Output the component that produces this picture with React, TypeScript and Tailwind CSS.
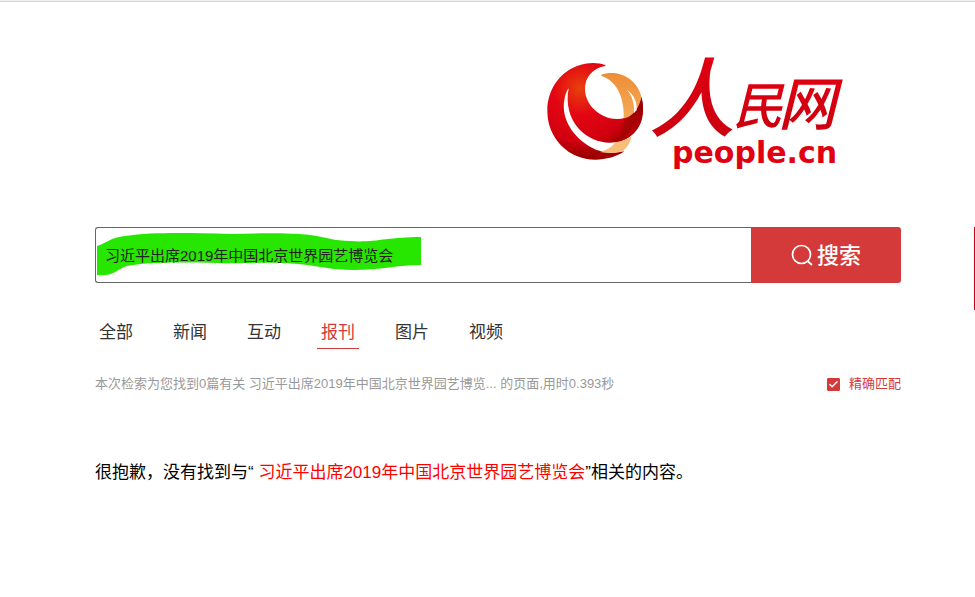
import React, { useState } from 'react'
import clsx from 'clsx'
import { Check } from 'lucide-react'

const KEYWORD = '习近平出席2019年中国北京世界园艺博览会'
const TABS = ['全部', '新闻', '互动', '报刊', '图片', '视频']

const Logo: React.FC = () => (
  <svg className="overflow-visible" width="300" height="125" viewBox="0 0 300 125" role="img" aria-label="人民网 people.cn">
    <defs>
      <radialGradient id="globe" gradientUnits="userSpaceOnUse" cx="135" cy="130" r="200">
        <stop offset="0" stopColor="#e8410c" />
        <stop offset="0.4" stopColor="#e30613" />
        <stop offset="0.8" stopColor="#d0000f" />
        <stop offset="1" stopColor="#a00000" />
      </radialGradient>
      <linearGradient id="amber" x1="0" y1="0" x2="0" y2="1">
        <stop offset="0" stopColor="#ee8d35" />
        <stop offset="1" stopColor="#f4ab5c" />
      </linearGradient>
      <linearGradient id="shade" x1="0" y1="0" x2="0" y2="1">
        <stop offset="0" stopColor="#8e0000" />
        <stop offset="1" stopColor="#c4000c" />
      </linearGradient>
      <linearGradient id="ink" x1="0" y1="0" x2="0" y2="1">
        <stop offset="0" stopColor="#e60012" />
        <stop offset="1" stopColor="#c7000e" />
      </linearGradient>
    </defs>
    <g transform="translate(-10 -5) scale(.3333)">
      <path
        fill="url(#globe)"
        d="M211 60C190 52 156 51 126 63C72 83 37 137 37 197C37 281 102 344 181 344C213 344 246 335 268 319C232 327 198 324 168 307C114 277 78 221 88 166C90 150 95 138 101 130C92 176 103 220 132 252C162 284 202 297 240 292C284 287 322 252 324 201C325 185 323 169 319 156C309 198 282 222 246 222C197 222 150 181 150 132C150 96 174 69 211 63Z"
      />
      <path fill="url(#shade)" d="M319 156C326 180 326 206 315 232C302 263 279 284 251 291C273 274 284 250 288 207C303 195 314 178 319 156Z" />
      <path fill="url(#amber)" d="M198 90C241 73 302 93 319 154C318 168 309 190 298 202C290 212 278 219 266 221C269 171 252 108 198 92Z" />
      <path fill="#9d0800" d="M267 220C278 217 289 211 297 203C300 235 284 273 251 291C263 268 268 243 267 220Z" opacity=".55" />
      <path fill="#fff" d="M276 134C297 149 307 172 305 195L297 204C299 177 292 153 276 134Z" />
      <path fill="#f8bd78" d="M241 292C260 290 277 284 290 274C287 291 278 306 264 318C242 326 216 325 195 321C216 315 231 307 241 292Z" />
    </g>
    <g fill="url(#ink)" fontStyle="italic" fontFamily='"Noto Sans CJK SC", sans-serif'>
      <text x="104" y="80" fontSize="86" fontWeight="500">人</text>
      <text x="188" y="74" fontSize="50" fontWeight="500">民</text>
      <text x="233" y="75" fontSize="58" fontWeight="500">网</text>
    </g>
    <text x="127" y="113" fontSize="30" fontWeight="700" fill="#e0000f" fontFamily='"DejaVu Sans", sans-serif'>
      people.cn
    </text>
  </svg>
)

// green marker swipe behind the query
const Marker: React.FC = () => (
  <svg className="pointer-events-none absolute left-0 top-0" width="330" height="54" viewBox="0 0 330 54" aria-hidden="true">
    <path
      fill="#27e600"
      d="M1 18C9 16 15 9 29 8C58 4 91 5 135 6C165 5 197 5 214 7C229 9 239 13 254 13C278 15 291 9 325 9V37C303 37 284 42 257 42C237 42 222 38 202 36C174 33 151 36 121 35C84 34 48 34 31 38C22 41 17 47 9 47H1Z"
    />
  </svg>
)

export default function App() {
  const [query, setQuery] = useState(KEYWORD)
  const [active, setActive] = useState('报刊')
  const [exact, setExact] = useState(true)

  return (
    <div className="relative min-h-screen border-t border-[#f0f0f0] bg-white font-['Liberation_Sans','Noto_Sans_CJK_SC',sans-serif] text-black">
      <div className="h-px bg-[#d6d6d6]" />
      <div className="absolute right-0 top-[226px] h-[83px] w-px bg-[#c8001c]" />

      <main className="ml-[95px] mr-[74px] pt-12">
        <header className="flex justify-end pr-14">
          <Logo />
        </header>

        <form className="mt-[52px] flex h-14" onSubmit={e => e.preventDefault()}>
          <div className="relative min-w-0 flex-1 rounded-l-[3px] border border-r-0 border-[#666]">
            <Marker />
            <input
              type="text"
              aria-label="搜索关键词"
              value={query}
              onChange={e => setQuery(e.target.value)}
              className="relative h-full w-full bg-transparent px-[9px] pb-0.5 text-[15px] text-[#222] outline-none"
            />
          </div>
          <button type="submit" className="flex w-[150px] shrink-0 items-center justify-center gap-1 rounded-r-[3px] bg-[#d43a3a] text-[22px] font-medium text-white">
            <svg width="22" height="22" viewBox="0 0 22 22" fill="none" stroke="currentColor" strokeWidth="1.7" aria-hidden="true">
              <circle cx="10.5" cy="10.5" r="9" />
              <path d="M16.5 17L21 21" />
            </svg>
            搜索
          </button>
        </form>

        <nav className="mt-9 flex gap-8">
          {TABS.map(tab => (
            <button
              key={tab}
              type="button"
              onClick={() => setActive(tab)}
              className={clsx(
                'border-b px-1 pb-px text-[17px] leading-7',
                active === tab ? 'border-b-[#d43a3a] text-[#d43a3a]' : 'border-b-transparent text-[#333]',
              )}
            >
              {tab}
            </button>
          ))}
        </nav>

        <div className="mt-6 flex items-center justify-between text-[13px] leading-[22px]">
          <p className="text-[#999]">本次检索为您找到0篇有关 习近平出席2019年中国北京世界园艺博览... 的页面,用时0.393秒</p>
          <label className="flex items-center gap-[9px] text-[#d43a3a]">
            <span className="relative flex">
              <input
                type="checkbox"
                checked={exact}
                onChange={e => setExact(e.target.checked)}
                className="h-[13px] w-[13px] appearance-none rounded-[1px] border border-[#d43a3a] checked:bg-[#d43a3a]"
              />
              {exact && <Check size={11} strokeWidth={3} className="pointer-events-none absolute left-px top-px text-white" />}
            </span>
            精确匹配
          </label>
        </div>

        <p className="mt-16 text-[17px] leading-7">
          很抱歉，没有找到与“ <span className="text-[#f00]">{KEYWORD}</span>”相关的内容。
        </p>
      </main>
    </div>
  )
}
